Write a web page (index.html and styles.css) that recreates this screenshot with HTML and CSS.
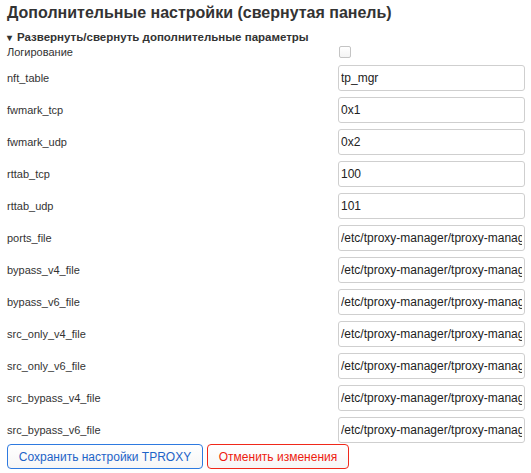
FILE: index.html
```html
<!DOCTYPE html>
<html lang="ru">
<head>
<meta charset="utf-8">
<link rel="stylesheet" href="styles.css">
</head>
<body>
<h2 class="title">Дополнительные настройки (свернутая панель)</h2>
<details class="adv" open>
  <summary class="adv-summary">Развернуть/свернуть дополнительные параметры</summary>
  <div class="form-grid">
    <label class="lbl lbl-check">Логирование</label>
    <div class="ctl ctl-check"><input type="checkbox" class="chk"></div>
    <label class="lbl">nft_table</label>
    <input class="txt" type="text" value="tp_mgr">
    <label class="lbl">fwmark_tcp</label>
    <input class="txt" type="text" value="0x1">
    <label class="lbl">fwmark_udp</label>
    <input class="txt" type="text" value="0x2">
    <label class="lbl">rttab_tcp</label>
    <input class="txt" type="text" value="100">
    <label class="lbl">rttab_udp</label>
    <input class="txt" type="text" value="101">
    <label class="lbl">ports_file</label>
    <input class="txt" type="text" value="/etc/tproxy-manager/tproxy-manager.ports">
    <label class="lbl">bypass_v4_file</label>
    <input class="txt" type="text" value="/etc/tproxy-manager/tproxy-manager.bypass_v4">
    <label class="lbl">bypass_v6_file</label>
    <input class="txt" type="text" value="/etc/tproxy-manager/tproxy-manager.bypass_v6">
    <label class="lbl">src_only_v4_file</label>
    <input class="txt" type="text" value="/etc/tproxy-manager/tproxy-manager.src_only_v4">
    <label class="lbl">src_only_v6_file</label>
    <input class="txt" type="text" value="/etc/tproxy-manager/tproxy-manager.src_only_v6">
    <label class="lbl">src_bypass_v4_file</label>
    <input class="txt" type="text" value="/etc/tproxy-manager/tproxy-manager.src_bypass_v4">
    <label class="lbl">src_bypass_v6_file</label>
    <input class="txt" type="text" value="/etc/tproxy-manager/tproxy-manager.src_bypass_v6">
  </div>
</details>
<div class="actions">
  <button class="btn btn-save" type="button">Сохранить настройки TPROXY</button>
  <button class="btn btn-cancel" type="button">Отменить изменения</button>
</div>
</body>
</html>
```
FILE: styles.css
```css
html, body {
  margin: 0;
  padding: 0;
  background: #fff;
}
body {
  padding: 3px 7px 0 7px;
  font-family: "Liberation Sans", Arial, sans-serif;
  color: #222;
}
.title {
  margin: 0;
  font-size: 16px;
  line-height: 20px;
  font-weight: bold;
  color: #333;
}
.adv {
  margin-top: 7px;
}
.adv-summary {
  font-size: 11.5px;
  line-height: 14px;
  font-weight: bold;
  color: #333;
  cursor: pointer;
  list-style: none;
}
.adv-summary::-webkit-details-marker { display: none; }
.adv-summary::before {
  content: "▾";
  font-size: 10px;
  margin-right: 5px;
}
.form-grid {
  display: grid;
  grid-template-columns: 331px 187px;
  row-gap: 6px;
  align-items: center;
  margin-top: 0;
}
.lbl {
  font-size: 11px;
  color: #333;
  line-height: 14px;
}
.ctl-check {
  height: 14px;
  display: flex;
  align-items: center;
}
.chk {
  appearance: none;
  -webkit-appearance: none;
  width: 12px;
  height: 12px;
  margin: 0 0 0 1px;
  border: 1px solid #c4c4c4;
  border-radius: 2px;
  background: linear-gradient(#fff, #f4f4f4);
}
.txt {
  box-sizing: border-box;
  width: 187px;
  height: 26px;
  margin: 0;
  padding: 0 2px;
  border: 1px solid #cfcfcf;
  border-radius: 3px;
  font-family: "Liberation Sans", Arial, sans-serif;
  font-size: 12px;
  color: #222;
  background: #fff;
  outline: none;
}
.actions {
  display: flex;
  gap: 4px;
  margin-top: 1px;
}
.btn {
  box-sizing: border-box;
  height: 25px;
  padding: 0 4px;
  border-radius: 4px;
  background: linear-gradient(#fff, #f6f6f6);
  font-family: "Liberation Sans", Arial, sans-serif;
  font-size: 12px;
  white-space: nowrap;
  cursor: pointer;
}
.btn-save {
  width: 196px;
  border: 1px solid #2e7ae0;
  color: #1d64c8;
}
.btn-cancel {
  width: 142px;
  border: 1px solid #f0281a;
  color: #ee1c10;
}
```
